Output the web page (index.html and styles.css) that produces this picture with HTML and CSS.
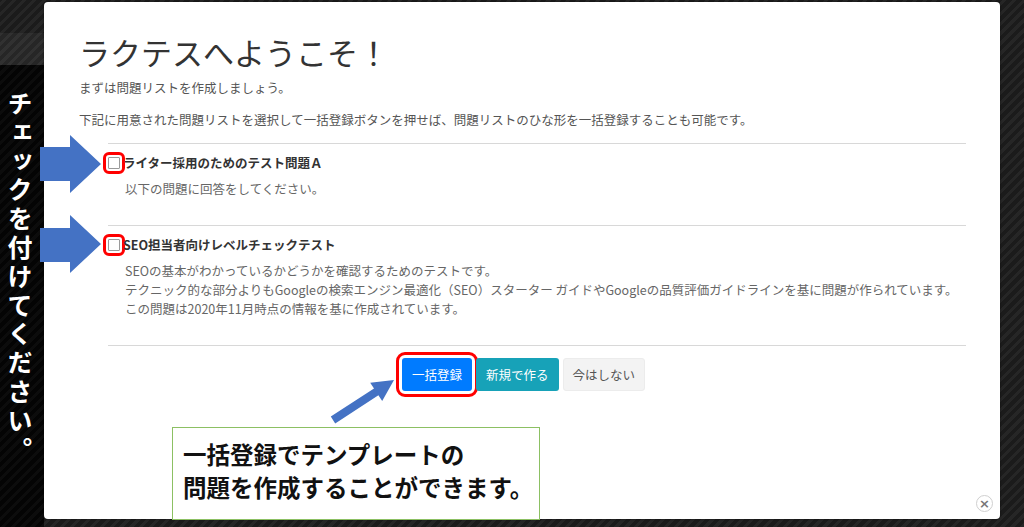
FILE: index.html
```html
<!DOCTYPE html>
<html lang="ja">

<head>
    <meta charset="UTF-8">
    <meta name="viewport" content="width=device-width, initial-scale=1.0">
    <title>ラクテス</title>
    <link rel="stylesheet" href="styles.css">
</head>

<body>
    <div class="side">
        <div class="side-top"></div>
        <div class="side-menu"></div>
        <div class="side-body">
            <p class="side-note">チェックを付けてください。</p>
        </div>
    </div>

    <div class="modal">
        <h1>ラクテスへようこそ！</h1>
        <p class="lead">まずは問題リストを作成しましょう。</p>
        <p class="note">下記に用意された問題リストを選択して一括登録ボタンを押せば、問題リストのひな形を一括登録することも可能です。</p>

        <div class="list">
            <div class="item">
                <label class="item-title"><span class="check marked"></span>ライター採用のためのテスト問題Ａ</label>
                <p class="item-desc">以下の問題に回答をしてください。</p>
            </div>
            <div class="item">
                <label class="item-title"><span class="check marked"></span>SEO担当者向けレベルチェックテスト</label>
                <p class="item-desc">SEOの基本がわかっているかどうかを確認するためのテストです。<br>テクニック的な部分よりもGoogleの検索エンジン最適化（SEO）スターター ガイドやGoogleの品質評価ガイドラインを基に問題が作られています。<br>この問題は2020年11月時点の情報を基に作成されています。</p>
            </div>
            <hr class="divider">
        </div>

        <div class="actions">
            <button class="btn btn-primary marked">一括登録</button>
            <button class="btn btn-info">新規で作る</button>
            <button class="btn btn-light">今はしない</button>
        </div>

        <span class="close">&times;</span>
    </div>

    <!-- annotations drawn over the screenshot -->
    <svg class="arrows" width="1024" height="527" viewBox="0 0 1024 527">
        <polygon points="40,147 70,147 70,135 101,164 70,193 70,181 40,181" />
        <polygon points="40,228 70,228 70,215 101,244 70,273 70,262 40,262" />
        <polygon points="330.8,416.6 374,388.5 370.2,382.7 394,380 382.2,401.1 378.4,395.3 335.2,423.4" />
    </svg>

    <div class="callout">一括登録でテンプレートの<br>問題を作成することができます。</div>
</body>

</html>
```

FILE: styles.css
```css
body {
    margin: 0;
    width: 1024px;
    height: 527px;
    overflow: hidden;
    display: flex;
    align-items: flex-start;
    font-family: "Noto Sans CJK JP", sans-serif;
    background: repeating-linear-gradient(-45deg, #262626 0 3px, #1b1b1b 3px 7px);
    position: relative;
}

.side {
    width: 44px;
    height: 527px;
    display: flex;
    flex-direction: column;
}

.side-top {
    height: 33px;
}

.side-menu {
    height: 32px;
    background: rgba(255, 255, 255, 0.05);
}

.side-body {
    flex: 1;
    background: repeating-linear-gradient(-45deg, #0c0c0c 0 3px, #040404 3px 7px);
}

.side-note {
    margin: 26px 0 0 4px;
    writing-mode: vertical-rl;
    text-orientation: upright;
    color: #fff;
    font-weight: bold;
    font-size: 25px;
    line-height: 32px;
    letter-spacing: 3.8px;
}

.modal {
    width: 956px;
    height: 517px;
    margin-top: 2px;
    box-sizing: border-box;
    padding: 30px 34px 0 35px;
    background: #fff;
    border-radius: 4px;
    position: relative;
    color: #555;
    font-size: 12.5px;
    box-shadow: 0 0 2px rgba(0, 0, 0, 0.5);
}

.modal h1 {
    margin: 0;
    font-size: 31px;
    line-height: 40px;
    font-weight: normal;
    color: #333;
}

.lead {
    margin: 6px 0 0;
    line-height: 20px;
}

.note {
    margin: 12px 0 0;
    line-height: 20px;
}

.list {
    margin: 13px 0 0 29px;
}

.item {
    border-top: 1px solid #d8d8d8;
    padding: 9px 0 27px;
}

.divider {
    margin: 0;
    border: 0;
    border-top: 1px solid #d8d8d8;
}

.item-title {
    display: flex;
    align-items: center;
    line-height: 20px;
    font-weight: bold;
    color: #333;
}

.check {
    width: 10px;
    height: 10px;
    border: 1px solid #9a9a9a;
    border-radius: 1px;
    margin-right: 3px;
    background: #fff;
}

.check.marked {
    outline: 3px solid #ff0000;
    outline-offset: 2px;
}

.item-desc {
    margin: 6px 0 0 17px;
    line-height: 19px;
    color: #666;
}

.actions {
    margin-top: 12px;
    padding-left: 2px;
    display: flex;
    justify-content: center;
    gap: 4px;
}

.btn {
    height: 33px;
    padding: 0 9px;
    border: 1px solid transparent;
    border-radius: 3px;
    font-family: inherit;
    font-size: 12.5px;
    color: #fff;
}

.btn-primary {
    background: #007bff;
}

.btn-primary.marked {
    outline: 3px solid #ff0000;
    outline-offset: 3px;
}

.btn-info {
    background: #17a2b8;
}

.btn-light {
    background: #f3f3f3;
    border-color: #ececec;
    color: #555;
}

.close {
    position: absolute;
    right: 7px;
    bottom: 7px;
    width: 15px;
    height: 15px;
    border: 1.5px solid #cfcfcf;
    border-radius: 50%;
    color: #777;
    font-size: 13px;
    font-weight: bold;
    line-height: 15px;
    text-align: center;
    font-family: "DejaVu Sans", sans-serif;
}

.arrows {
    position: absolute;
    left: 0;
    top: 0;
    pointer-events: none;
}

.arrows polygon {
    fill: #4472c4;
}

.callout {
    position: absolute;
    left: 172px;
    top: 427px;
    width: 368px;
    height: 93px;
    box-sizing: border-box;
    padding: 10px 0 0 10px;
    border: 1px solid #8cc063;
    background: #fff;
    color: #111;
    font-weight: bold;
    font-size: 23.5px;
    line-height: 33px;
    white-space: nowrap;
}
```
